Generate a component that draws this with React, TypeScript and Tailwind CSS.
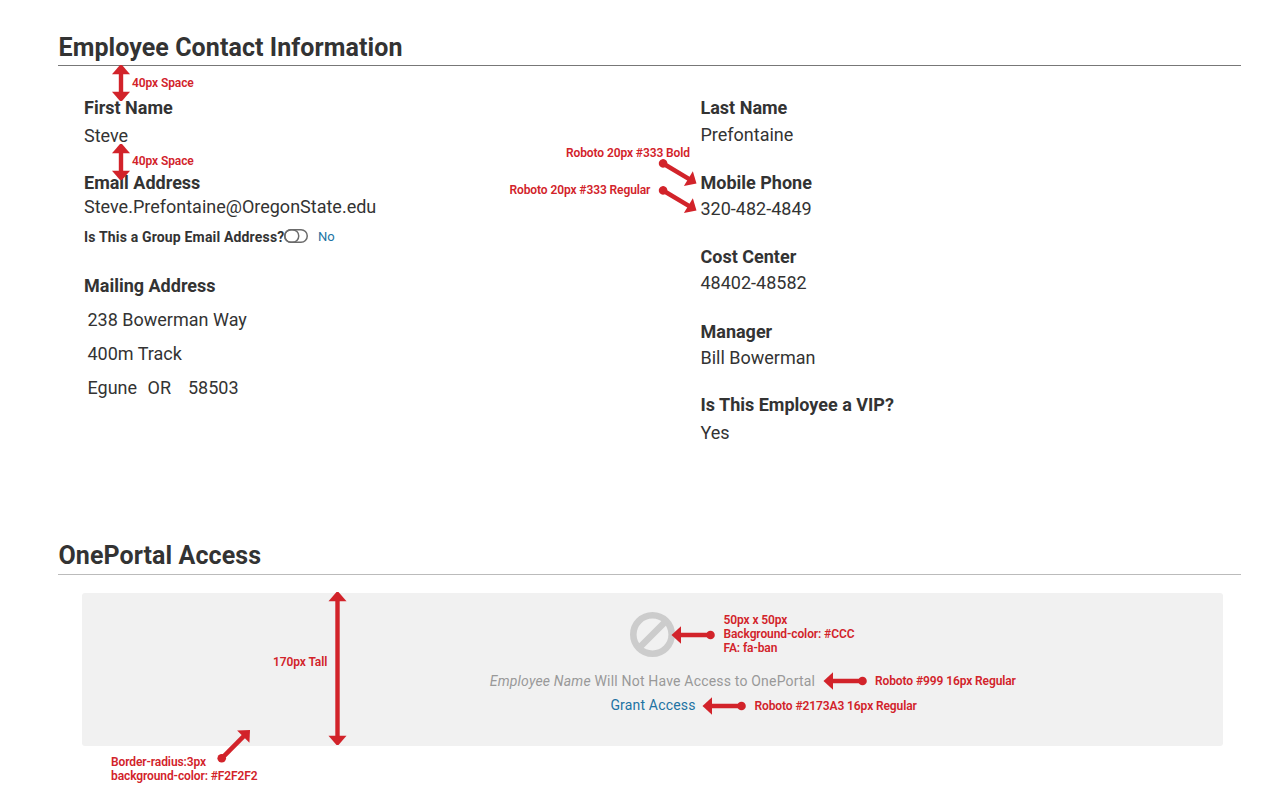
import type { ReactNode } from "react";

const RED = "#d2232a";

function SectionTitle({ children, className }: { children: ReactNode; className: string }) {
  return (
    <h2 className={`h-[38px] border-b text-[25px] leading-[38px] font-bold tracking-[0.08px] whitespace-nowrap ${className}`}>
      {children}
    </h2>
  );
}

function Label({ children, className }: { children: ReactNode; className: string }) {
  return <div className={`h-6 text-[18px] leading-6 font-bold whitespace-nowrap ${className}`}>{children}</div>;
}

function Value({ children, className }: { children: ReactNode; className: string }) {
  return <div className={`h-6 text-[18px] leading-6 whitespace-nowrap ${className}`}>{children}</div>;
}

function Toggle() {
  return (
    <svg className="relative -top-px" width="24" height="14" viewBox="0 0 24 14" fill="none" stroke="#6b6b6b" strokeWidth="1.5">
      <rect x="0.75" y="0.75" width="22.5" height="12.5" rx="6.25" />
      <rect x="0.75" y="0.75" width="14" height="12.5" rx="6.25" />
    </svg>
  );
}

function BanIcon() {
  return (
    <svg width="45" height="45" viewBox="0 0 45 45" fill="none" stroke="#cccccc" strokeWidth="6.6">
      <circle cx="22.5" cy="22.5" r="19.2" />
      <path d="M9 36 36 9" />
    </svg>
  );
}

function Note({ children, className }: { children: ReactNode; className: string }) {
  return (
    <div
      className={`absolute text-[12px] leading-[14px] font-semibold tracking-[-0.1px] whitespace-nowrap text-[#d2232a] ${className}`}
    >
      {children}
    </div>
  );
}

function DoubleArrow({ x, top, bottom }: { x: number; top: number; bottom: number }) {
  return (
    <g>
      <path d={`M${x} ${top + 7}V${bottom - 7}`} stroke={RED} strokeWidth="4.4" />
      <path d={`M${x - 1} ${top}h2l8 9.3h-18z`} fill={RED} />
      <path d={`M${x - 1} ${bottom}h2l8-9.3h-18z`} fill={RED} />
    </g>
  );
}

/* Pointer whose tip sits at (x, y); the tail dot is `length` away at `angle` degrees. */
function Pointer({ x, y, angle, length }: { x: number; y: number; angle: number; length: number }) {
  return (
    <g transform={`translate(${x} ${y}) rotate(${angle})`} fill={RED}>
      <path d="M0 0 9.5-8.7V8.7Z" />
      <path d={`M7 0H${length}`} stroke={RED} strokeWidth="4.6" />
      <circle cx={length} cy="0" r="4.3" />
    </g>
  );
}

export default function App() {
  return (
    <main className="relative h-[798px] w-[1266px] overflow-hidden bg-white pt-7 pr-[25px] pl-[58px] font-['Roboto',sans-serif] text-[#333]">
      <section className="h-[509px]">
        <SectionTitle className="border-[#777] pt-px pl-[0.5px]">Employee Contact Information</SectionTitle>
        <div className="flex pt-[30px] pl-[26px]">
          <div className="w-[616.5px]">
            <Label className="">First Name</Label>
            <Value className="mt-1">Steve</Value>
            <Label className="mt-[23px]">Email Address</Label>
            <Value className="">Steve.Prefontaine@OregonState.edu</Value>
            <div className="mt-1.5 flex h-6 items-center">
              <span className="w-[200px] text-[14px] font-bold tracking-[0.17px] whitespace-nowrap">
                Is This a Group Email Address?
              </span>
              <Toggle />
              <span className="ml-2.5 text-[13px] text-[#2173a3]">No</span>
            </div>
            <Label className="mt-[25px]">Mailing Address</Label>
            <Value className="mt-2.5 pl-[3.5px]">238 Bowerman Way</Value>
            <Value className="mt-2.5 pl-[3.5px]">400m Track</Value>
            <div className="mt-2.5 flex h-6 pl-[3.5px] text-[18px] leading-6">
              <span className="w-[60px]">Egune</span>
              <span className="w-[40.5px]">OR</span>
              <span>58503</span>
            </div>
          </div>
          <div>
            <Label className="">Last Name</Label>
            <Value className="mt-[3px]">Prefontaine</Value>
            <Label className="mt-6">Mobile Phone</Label>
            <Value className="mt-0.5">320-482-4849</Value>
            <Label className="mt-6">Cost Center</Label>
            <Value className="mt-0.5">48402-48582</Value>
            <Label className="mt-[25px]">Manager</Label>
            <Value className="mt-0.5">Bill Bowerman</Value>
            <Label className="mt-[23px]">Is This Employee a VIP?</Label>
            <Value className="mt-1">Yes</Value>
          </div>
        </div>
      </section>

      <section>
        <SectionTitle className="border-[#bbb] pl-[0.5px]">OnePortal Access</SectionTitle>
        <div className="mt-[18px] mr-[18px] ml-6 flex h-[153px] flex-col items-center rounded-[3px] bg-[#f1f1f1] pt-[19px]">
          <BanIcon />
          <p className="mt-3 h-6 text-[14px] leading-6 tracking-[0.19px] whitespace-nowrap text-[#999]">
            <em>Employee Name</em> Will Not Have Access to OnePortal
          </p>
          <a href="#" className="h-6 pl-px text-[14px] leading-6 tracking-[0.18px] text-[#2173a3]">
            Grant Access
          </a>
        </div>
      </section>

      <svg className="pointer-events-none absolute top-0 left-0" width="1266" height="798">
        <DoubleArrow x={121} top={65} bottom={101} />
        <DoubleArrow x={121} top={144} bottom={180} />
        <DoubleArrow x={337.5} top={592} bottom={745} />
        <Pointer x={696.5} y={183.5} angle={211} length={39} />
        <Pointer x={696.5} y={210.5} angle={211} length={39} />
        <Pointer x={671.5} y={635} angle={0} length={39} />
        <Pointer x={823.5} y={681} angle={0} length={39} />
        <Pointer x={702.5} y={706} angle={0} length={39} />
        <Pointer x={250} y={730} angle={135} length={40} />
      </svg>
      <Note className="top-[76px] left-[132px]">40px Space</Note>
      <Note className="top-[154px] left-[132px]">40px Space</Note>
      <Note className="top-[146px] left-[566px]">Roboto 20px #333 Bold</Note>
      <Note className="top-[183px] left-[509.5px]">Roboto 20px #333 Regular</Note>
      <Note className="top-[655px] left-[273px]">170px Tall</Note>
      <Note className="top-[613px] left-[723.5px]">
        50px x 50px
        <br />
        Background-color: #CCC
        <br />
        FA: fa-ban
      </Note>
      <Note className="top-[674px] left-[875px]">Roboto #999 16px Regular</Note>
      <Note className="top-[699px] left-[754.5px]">Roboto #2173A3 16px Regular</Note>
      <Note className="top-[755px] left-[111px]">
        Border-radius:3px
        <br />
        background-color: #F2F2F2
      </Note>
    </main>
  );
}
